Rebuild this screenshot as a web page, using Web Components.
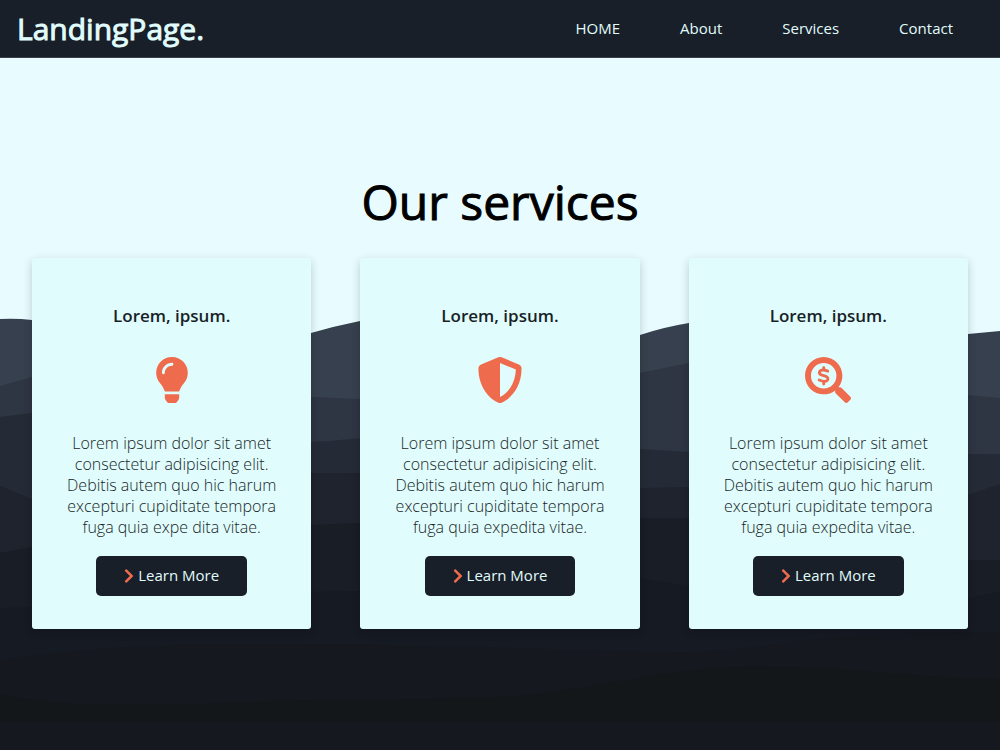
<!DOCTYPE html>
<html lang="en">
<head>
<meta charset="utf-8">
<meta name="viewport" content="width=device-width, initial-scale=1">
<title>LandingPage.</title>
<style>
  :root { --ink: #191f28; --ice: #e0fcfc; --accent: #ee6c4d; }
  body { margin: 0; font: 16px/22px "Open Sans", sans-serif; background: #14181f; }
</style>
</head>
<body>
<landing-page></landing-page>
<script>
const define = (name, html) => {
  const t = document.createElement('template');
  t.innerHTML = html;
  customElements.define(name, class extends HTMLElement {
    constructor() {
      super();
      this.attachShadow({ mode: 'open' }).appendChild(t.content.cloneNode(true));
    }
  });
};

define('nav-link', `
<style>
  :host { display: block; }
  a { display: block; padding: 0 30px 2px; color: var(--ice); font-size: 15px; line-height: 22px; text-decoration: none; }
</style>
<a href="#"><slot></slot></a>`);

define('site-header', `
<style>
  :host { display: block; background: var(--ink); border-bottom: 1px solid #3a3f4c; }
  header { display: flex; align-items: center; justify-content: space-between; padding: 0 17px; min-height: 57px; }
  .logo { color: var(--ice); font-size: 30px; line-height: 44px; font-weight: 400; -webkit-text-stroke: 1px currentColor; text-decoration: none; }
  nav { display: flex; }
</style>
<header>
  <a class="logo" href="#">LandingPage.</a>
  <nav>
    <nav-link>HOME</nav-link><nav-link>About</nav-link><nav-link>Services</nav-link><nav-link>Contact</nav-link>
  </nav>
</header>`);

define('wave-backdrop', `
<style>
  :host { display: block; }
  svg { display: block; width: 100%; height: 100%; }
</style>
<svg viewBox="0 318 1000 432" preserveAspectRatio="none" aria-hidden="true">
  <path fill="#37404e" d="M0 319Q16 318 32 320C130 325 210 352 311 333Q335 326 360 321C450 298 540 362 640 335Q664 327 689 323C780 298 860 344 968 334L1000 331V750H0z"/>
  <path fill="#2e3543" d="M0 386L32 377C120 355 220 392 311 397Q335 398 360 399C460 402 550 390 640 373L689 363C780 344 880 388 968 395L1000 398V750H0z"/>
  <path fill="#252b36" d="M0 417L32 413C130 402 230 448 311 442Q335 441 360 438C450 424 550 446 640 449L689 452C790 458 880 452 968 454H1000V750H0z"/>
  <path fill="#1e232d" d="M0 486L32 499C120 530 220 474 311 473H360C460 475 550 490 640 488L689 487C790 486 880 530 968 495L1000 484V750H0z"/>
  <path fill="#181d26" d="M0 553L32 547C130 530 220 530 311 525L360 523C460 514 550 518 640 518H689C790 522 880 560 968 560H1000V750H0z"/>
  <path fill="#161a23" d="M0 608C120 606 220 600 311 592L360 591C460 580 550 566 640 578L689 586C790 604 880 615 968 598L1000 592V750H0z"/>
  <path fill="#15191f" d="M0 660C100 644 220 643 300 644C450 644 600 652 690 652C770 650 790 632 1000 632V750H0z"/>
  <path fill="#14171a" d="M0 693C60 712 220 703 300 700C400 699 480 700 543 693C640 680 690 664 769 667C850 666 910 678 1000 679V750H0z"/>
  <path fill="#15181e" d="M0 722H1000V750H0z"/>
</svg>`);

define('learn-button', `
<style>
  :host { display: block; }
  button { display: flex; align-items: center; gap: 4px; height: 40px; padding: 0 28px; border: 0; border-radius: 5px;
    background: var(--ink); color: var(--ice); font: inherit; font-size: 15px; line-height: 22px; white-space: nowrap; cursor: pointer; }
  span { padding-bottom: 2px; }
  svg { width: 10px; height: 16px; fill: var(--accent); }
</style>
<button type="button">
  <svg viewBox="0 0 320 512" aria-hidden="true"><path d="M285.476 272.971L91.132 467.314c-9.373 9.373-24.569 9.373-33.941 0l-22.667-22.667c-9.357-9.357-9.375-24.522-.04-33.901L188.505 256 34.484 101.255c-9.335-9.379-9.317-24.544.04-33.901l22.667-22.667c9.373-9.373 24.569-9.373 33.941 0L285.475 239.03c9.373 9.372 9.373 24.568.001 33.941z"/></svg>
  <span><slot></slot></span>
</button>`);

define('service-card', `
<style>
  :host { display: flex; flex-direction: column; align-items: center; box-sizing: border-box; padding: 46px 24px 33px;
    background: var(--ice); border-radius: 3px; box-shadow: 0 3px 10px rgb(0 0 0 / .2); text-align: center; color: var(--ink); }
  h2 { margin: 0 0 29px; font-size: 17px; line-height: 24px; font-weight: 600; }
  .icon { height: 46px; margin-bottom: 30px; }
  ::slotted(svg) { display: block; width: 46px; height: 46px; fill: var(--accent); }
  p { margin: 0 0 18px; line-height: 21px; font-weight: 300; }
</style>
<h2><slot name="title"></slot></h2>
<div class="icon"><slot name="icon"></slot></div>
<p><slot></slot></p>
<learn-button>Learn More</learn-button>`);

define('landing-page', `
<style>
  :host { display: flex; flex-direction: column; min-height: 100vh; }
  main { flex: 1; position: relative; isolation: isolate; padding: 111px 32px 121px; background: #e8fcff; }
  wave-backdrop { position: absolute; z-index: -1; left: 0; right: 0; bottom: 0; height: 432px; }
  h1 { margin: 0 0 24px; font-size: 48px; line-height: 65px; font-weight: 400; -webkit-text-stroke: 1px currentColor; text-align: center; color: #000; }
  .cards { display: grid; grid-template-columns: repeat(auto-fit, minmax(250px, 1fr)); gap: 49px; }
</style>
<site-header></site-header>
<main>
  <wave-backdrop></wave-backdrop>
  <h1>Our services</h1>
  <div class="cards">
    <service-card>
      <span slot="title">Lorem, ipsum.</span>
      <svg slot="icon" viewBox="-64 0 512 512" aria-hidden="true"><path d="M112.1 454.3c0 6.297 1.816 12.44 5.284 17.69l17.14 25.69c5.25 7.875 17.17 14.28 26.64 14.28h61.67c9.438 0 21.36-6.401 26.61-14.28l17.08-25.68c2.938-4.438 5.348-12.37 5.348-17.7L272 415.1h-160L112.1 454.3zM191.4 .0132C89.44 .3257 16 82.97 16 175.1c0 44.38 16.44 84.84 43.56 115.8c16.53 18.84 42.34 58.23 52.22 91.45c.0313 .25 .0938 .5166 .125 .7823h160.2c.0313-.2656 .0938-.5166 .125-.7823c9.875-33.22 35.69-72.61 52.22-91.45C351.6 260.8 368 220.4 368 175.1C368 78.61 288.9-.2837 191.4 .0132zM192 96.01c-44.13 0-80 35.89-80 79.1C112 184.8 104.8 192 96 192S80 184.8 80 176c0-61.76 50.25-111.1 112-111.1c8.844 0 16 7.159 16 16S200.8 96.01 192 96.01z"/></svg>
      Lorem ipsum dolor sit amet consectetur adipisicing elit. Debitis autem quo hic harum excepturi cupiditate tempora fuga quia expe dita vitae.
    </service-card>
    <service-card>
      <span slot="title">Lorem, ipsum.</span>
      <svg slot="icon" viewBox="0 0 512 512" aria-hidden="true"><path fill-rule="evenodd" d="M466.5 83.7l-192-80a48.15 48.15 0 0 0-36.9 0l-192 80C27.7 91.1 16 108.6 16 128c0 198.5 114.5 335.7 221.5 380.3 11.8 4.9 25.1 4.9 36.9 0C360.1 472.6 496 349.3 496 128c0-19.4-11.7-36.9-29.5-44.3zM256 66.6V446.3c92-46 172-154 176-306.4z"/></svg>
      Lorem ipsum dolor sit amet consectetur adipisicing elit. Debitis autem quo hic harum excepturi cupiditate tempora fuga quia expedita vitae.
    </service-card>
    <service-card>
      <span slot="title">Lorem, ipsum.</span>
      <svg slot="icon" viewBox="0 0 512 512" aria-hidden="true"><path fill-rule="evenodd" d="M505.04 442.66l-99.71-99.69c-4.5-4.5-10.6-7-17-7h-16.3c27.6-35.3 44-79.69 44-127.99C416.03 93.09 322.92 0 208.02 0S0 93.09 0 207.98s93.11 207.98 208.02 207.98c48.3 0 92.71-16.4 128.01-44v16.3c0 6.4 2.5 12.5 7 17l99.71 99.69c9.4 9.4 24.6 9.4 33.9 0l28.3-28.3c9.4-9.4 9.4-24.59.1-33.99zM208 66a142 142 0 1 0 0 284a142 142 0 1 0 0-284z"/><path fill="none" stroke="#ee6c4d" stroke-width="32" stroke-linecap="round" d="M253 157C226 145 204 142 187 147C154 155 152 187 179 198C200 207 221 208 241 219C265 234 257 263 233 269C208 275 181 266 158 256M208 118V144M208 272V300"/></svg>
      Lorem ipsum dolor sit amet consectetur adipisicing elit. Debitis autem quo hic harum excepturi cupiditate tempora fuga quia expedita vitae.
    </service-card>
  </div>
</main>`);
</script>
</body>
</html>
